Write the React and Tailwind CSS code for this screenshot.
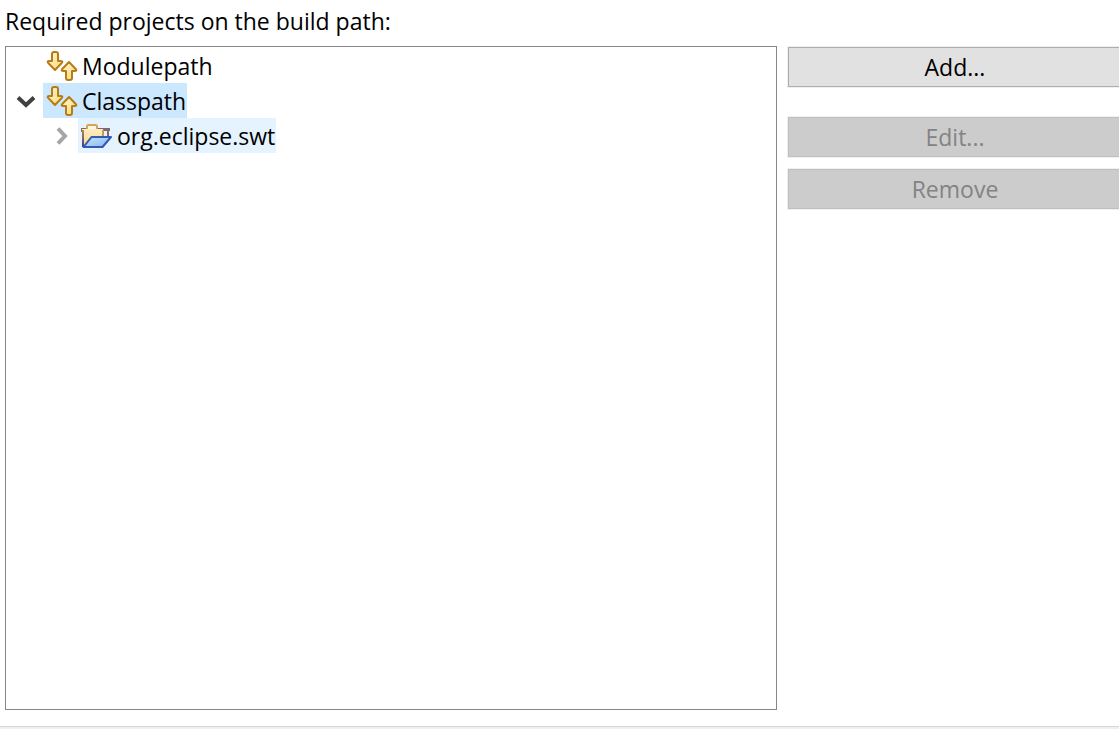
function PathIcon() {
  return (
    <svg className="h-8 w-8 shrink-0" viewBox="0 0 32 32" aria-hidden="true">
      <defs>
        <linearGradient id="arrow" x1="0" y1="0" x2="1" y2="1">
          <stop offset="0" stopColor="#fff8dc" />
          <stop offset="1" stopColor="#ffd970" />
        </linearGradient>
      </defs>
      <g
        fill="url(#arrow)"
        stroke="#b67d17"
        strokeWidth="2"
        strokeLinejoin="round"
      >
        <path d="M6 4Q6 2 8 2H10Q12 2 12 4V11H14.500Q17.500 11 15.700 13L9 20L2.300 13Q.5 11 3.500 11H6Z" />
        <path d="M20 28Q20 30 22 30H24Q26 30 26 28V21H28.500Q31.500 21 29.700 19L23 12L16.300 19Q14.500 21 17.500 21H20Z" />
      </g>
    </svg>
  );
}

function FolderIcon() {
  return (
    <svg className="h-8 w-8 shrink-0" viewBox="0 0 32 32" aria-hidden="true">
      <defs>
        <linearGradient id="folder" x1="0" y1="0" x2="0" y2="1">
          <stop offset="0" stopColor="#ffedc2" />
          <stop offset="1" stopColor="#fbd78a" />
        </linearGradient>
        <linearGradient id="side" x1="0" y1="0" x2="0" y2="1">
          <stop offset="0" stopColor="#c28a3c" />
          <stop offset="1" stopColor="#2c3f9c" />
        </linearGradient>
        <linearGradient id="flap" x1="0" y1="0" x2="1" y2="1">
          <stop offset="0" stopColor="#c4e8ff" />
          <stop offset="1" stopColor="#86b4ee" />
        </linearGradient>
      </defs>
      <path d="M0 8H29V11H28V16H26V11H2V12H0Z" fill="#80696b" />
      <path
        d="M6 10V6.500Q6 5 7.500 5H14.500Q16 5 16 6.500V10"
        fill="#fff6df"
        stroke="#d6a35c"
        strokeWidth="2"
      />
      <path d="M1 9H22V18H10L3 27H1Z" fill="url(#folder)" />
      <path d="M1 10H3V27H1Z" fill="url(#side)" />
      <path d="M21 10H23V16H21Z" fill="#c69a55" />
      <path
        d="M10.500 17H30L21.500 27H2.500Z"
        fill="url(#flap)"
        stroke="#3558b5"
        strokeWidth="2"
        strokeLinejoin="round"
      />
    </svg>
  );
}

function Chevron({ expanded }) {
  return (
    <svg
      className="h-5 w-5"
      viewBox="0 0 20 20"
      fill="none"
      strokeWidth="4"
      aria-hidden="true"
    >
      {expanded ? (
        <path d="M2 6.500L10 14L18 6.500" stroke="#404040" />
      ) : (
        <path d="M7 2.500L14 10L7 17.500" stroke="#a6a6a6" />
      )}
    </svg>
  );
}

function TreeRow({ label, icon, expandable, expanded, indent, highlight }) {
  return (
    <div className={`flex h-[35px] ${indent ? "pl-[35px]" : ""}`}>
      {expandable ? (
        <button
          type="button"
          className="flex w-[35px] items-center justify-center"
          aria-label={`Toggle ${label}`}
          aria-expanded={expanded}
        >
          <Chevron expanded={expanded} />
        </button>
      ) : (
        <span className="w-[35px]" />
      )}
      <div className={`flex items-center gap-1 pl-[3px] pr-px ${highlight}`}>
        {icon}
        <span>{label}</span>
      </div>
    </div>
  );
}

function SideButton({ children, disabled }) {
  return (
    <button
      type="button"
      disabled={disabled}
      className="h-10 w-full border border-r-0 border-[#adadad] bg-[#e1e1e1] pl-[2px] outline outline-[#f0f0f0] disabled:border-[#bfbfbf] disabled:bg-[#cccccc] disabled:text-[#838383]"
    >
      {children}
    </button>
  );
}

function App() {
  return (
    <div className="flex min-h-screen flex-col bg-white font-['Open_Sans','Noto_Sans',sans-serif] text-[23px] leading-8 text-black">
      <h1 className="px-[5px] pt-[5px] pb-[9px]">
        Required projects on the build path:
      </h1>
      <main className="flex grow gap-[11px] pl-[5px]">
        <div className="grow border border-[#828790] pt-px pl-[2px]">
          <TreeRow label="Modulepath" icon={<PathIcon />} />
          <TreeRow
            label="Classpath"
            icon={<PathIcon />}
            expandable
            expanded
            highlight="bg-[#cce8ff]"
          />
          <TreeRow
            label="org.eclipse.swt"
            icon={<FolderIcon />}
            expandable
            expanded={false}
            indent
            highlight="bg-[#e5f3ff]"
          />
        </div>
        <div className="flex w-[331px] shrink-0 flex-col pt-px">
          <SideButton>Add...</SideButton>
          <div className="mt-[30px] flex flex-col gap-3">
            <SideButton disabled>Edit...</SideButton>
            <SideButton disabled>Remove</SideButton>
          </div>
        </div>
      </main>
      <footer className="mt-4 h-[3px] border-t border-[#d7d7d7] bg-[#f0f0f0]" />
    </div>
  );
}

export default App;
